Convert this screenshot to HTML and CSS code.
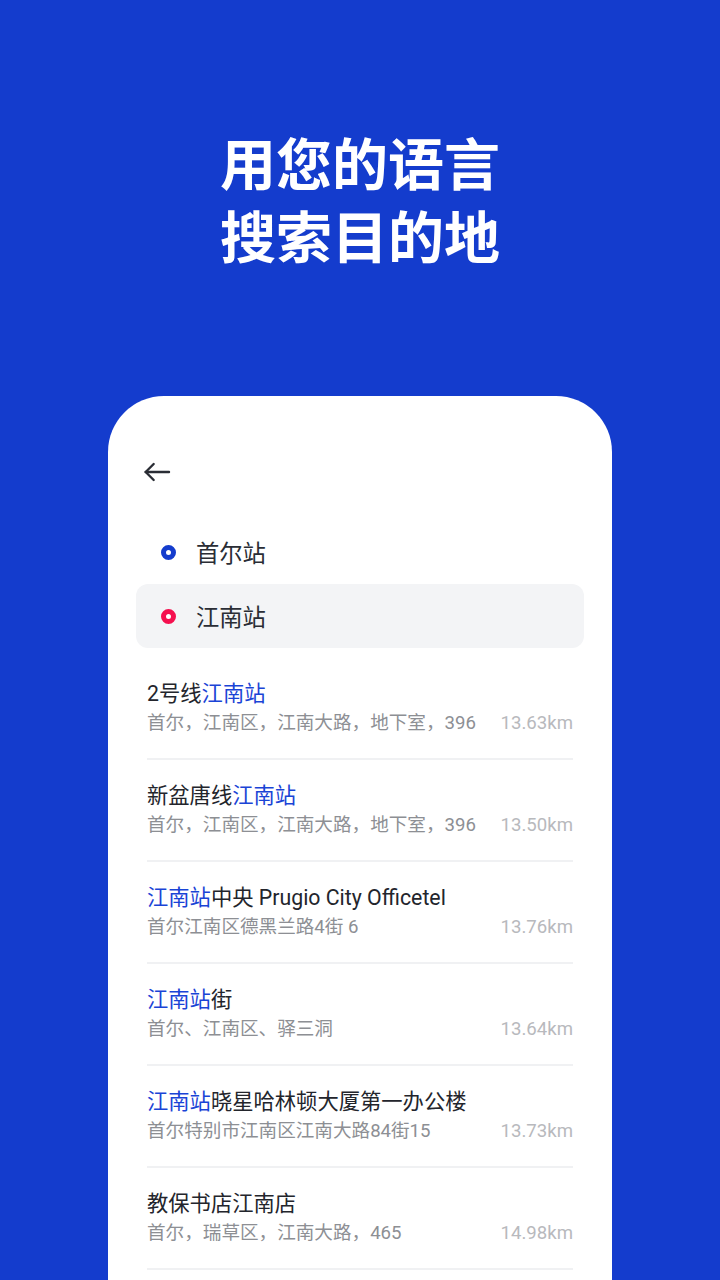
FILE: index.html
```html
<!DOCTYPE html>
<html lang="zh-CN">
<head>
  <meta charset="UTF-8" />
  <title>搜索目的地</title>
  <meta name="viewport" content="width=device-width, initial-scale=1" />
  <link rel="stylesheet" href="styles.css">
</head>
<body>
  <h1 class="headline">用您的语言<br>搜索目的地</h1>

  <div class="card">
    <div class="back">
      <svg width="32" height="32" viewBox="0 0 24 24" fill="none" stroke="#2a2d35" stroke-width="1.8" stroke-linecap="round" stroke-linejoin="round">
        <path d="M21 12H3.5" />
        <path d="M9.5 6l-6 6 6 6" />
      </svg>
    </div>

    <div class="stops">
      <div class="stop">
        <span class="dot dot-blue"></span>
        <span>首尔站</span>
      </div>
      <div class="stop active">
        <span class="dot dot-red"></span>
        <span>江南站</span>
      </div>
    </div>

    <div class="results">
      <div class="item">
        <div class="title">2号线<em>江南站</em></div>
        <div class="sub"><span>首尔，江南区，江南大路，地下室，396</span><span class="dist">13.63km</span></div>
      </div>
      <div class="item">
        <div class="title">新盆唐线<em>江南站</em></div>
        <div class="sub"><span>首尔，江南区，江南大路，地下室，396</span><span class="dist">13.50km</span></div>
      </div>
      <div class="item">
        <div class="title"><em>江南站</em>中央 Prugio City Officetel</div>
        <div class="sub"><span>首尔江南区德黑兰路4街 6</span><span class="dist">13.76km</span></div>
      </div>
      <div class="item">
        <div class="title"><em>江南站</em>街</div>
        <div class="sub"><span>首尔、江南区、驿三洞</span><span class="dist">13.64km</span></div>
      </div>
      <div class="item">
        <div class="title"><em>江南站</em>晓星哈林顿大厦第一办公楼</div>
        <div class="sub"><span>首尔特别市江南区江南大路84街15</span><span class="dist">13.73km</span></div>
      </div>
      <div class="item">
        <div class="title">教保书店江南店</div>
        <div class="sub"><span>首尔，瑞草区，江南大路，465</span><span class="dist">14.98km</span></div>
      </div>
    </div>
  </div>
</body>
</html>
```

FILE: styles.css
```css
html, body {
  margin: 0;
  padding: 0;
}
body {
  font-family: Roboto, "Noto Sans CJK SC", sans-serif;
  background: #143ccd;
  width: 720px;
  height: 1280px;
  overflow: hidden;
}
.headline {
  margin: 0;
  padding-top: 124px;
  color: #fff;
  font-family: "Noto Sans CJK SC", sans-serif;
  font-weight: 700;
  font-size: 56px;
  line-height: 73px;
  text-align: center;
}
.card {
  background: #fff;
  margin: 126px 108px 0;
  border-radius: 56px 56px 0 0;
  padding: 60px 28px 0;
  height: 900px;
}
.back {
  height: 32px;
  padding-left: 5px;
}
.back svg {
  display: block;
}
.stops {
  margin-top: 32px;
}
.stop {
  display: flex;
  align-items: center;
  gap: 20px;
  height: 64px;
  padding: 0 25px;
  border-radius: 12px;
  font-family: "Noto Sans CJK SC", sans-serif;
  font-size: 23.3px;
  color: #2a2d35;
}
.stop.active {
  background: #f3f4f6;
}
.dot {
  width: 5px;
  height: 5px;
  border-radius: 50%;
  border: 5px solid;
  background: #fff;
}
.dot-blue {
  border-color: #143ccd;
}
.dot-red {
  border-color: #f5104f;
}
.results {
  margin-top: 10px;
  padding: 0 11px;
}
.item {
  padding: 22px 0 22px;
  border-bottom: 2px solid #f0f1f3;
}
.title {
  font-size: 21.3px;
  line-height: 28px;
  color: #23252c;
  white-space: nowrap;
}
.title em {
  font-style: normal;
  color: #1a44d6;
}
.sub {
  margin-top: 2px;
  display: flex;
  justify-content: space-between;
  font-size: 18.6px;
  line-height: 26px;
  color: #8d8f94;
}
.dist {
  color: #b8b9bd;
}
```
